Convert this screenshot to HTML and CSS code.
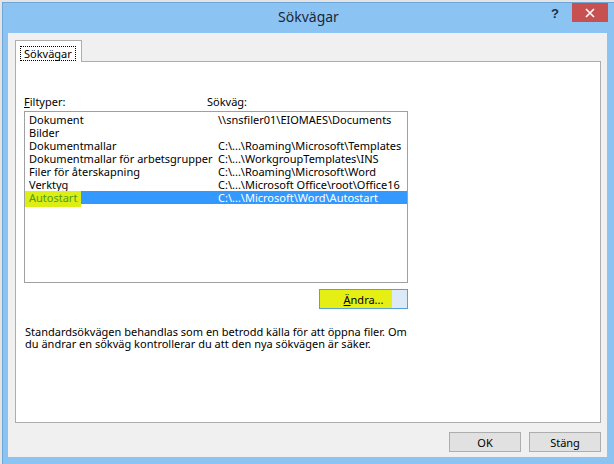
FILE: index.html
```html
<!DOCTYPE html>
<html lang="sv">
<head>
    <meta charset="UTF-8" />
    <title>Sökvägar</title>
    <link rel="stylesheet" href="styles.css">
</head>
<body>
    <div class="window">
        <div class="titlebar">
            <div></div>
            <div class="title">Sökvägar</div>
            <div class="controls">
                <span class="help">?</span>
                <span class="close">
                    <svg width="10" height="10" viewBox="0 0 10 10"><path d="M1 1 L9 9 M9 1 L1 9" stroke="#fff" stroke-width="1.6" /></svg>
                </span>
            </div>
        </div>

        <div class="client">
            <div class="tabs">
                <div class="tab"><span class="focus">Sökvägar</span></div>
            </div>

            <div class="panel">
                <div class="labels">
                    <span><u>F</u>iltyper:</span>
                    <span>Sökväg:</span>
                </div>

                <div class="listbox">
                    <div class="row"><span>Dokument</span><span>\\snsfiler01\EIOMAES\Documents</span></div>
                    <div class="row"><span>Bilder</span><span></span></div>
                    <div class="row"><span>Dokumentmallar</span><span>C:\...\Roaming\Microsoft\Templates</span></div>
                    <div class="row"><span>Dokumentmallar för arbetsgrupper</span><span>C:\...\WorkgroupTemplates\INS</span></div>
                    <div class="row"><span>Filer för återskapning</span><span>C:\...\Roaming\Microsoft\Word</span></div>
                    <div class="row"><span>Verktyg</span><span>C:\...\Microsoft Office\root\Office16</span></div>
                    <!-- marked with a highlighter in the screenshot -->
                    <div class="row selected"><span><span class="marker">Autostart</span></span><span>C:\...\Microsoft\Word\Autostart</span></div>
                </div>

                <div class="change-row">
                    <button class="btn change"><u>Ä</u>ndra...</button>
                </div>

                <p class="note">Standardsökvägen behandlas som en betrodd källa för att öppna filer. Om<br />du ändrar en sökväg kontrollerar du att den nya sökvägen är säker.</p>
            </div>

            <div class="buttons">
                <button class="btn">OK</button>
                <button class="btn">Stäng</button>
            </div>
        </div>
    </div>
</body>
</html>
```

FILE: styles.css
```css
html, body {
    margin: 0;
    padding: 0;
}
body {
    background-color: #e4e4e4;
    font-family: "Noto Sans", "Open Sans", sans-serif;
    font-size: 11px;
    color: #000;
    overflow: hidden;
}
.window {
    box-sizing: border-box;
    margin: 2px 0 0 2px;
    width: 612px;
    height: 462px;
    background-color: #8bc4f3;
    border-left: 1px solid #6ea6da;
    border-top: 1px solid #6ea6da;
    padding: 0 7px 7px 5px;
    display: flex;
    flex-direction: column;
}
.titlebar {
    height: 30px;
    display: grid;
    grid-template-columns: 1fr auto 1fr;
    align-items: start;
}
.title {
    font-size: 14px;
    color: #1c2733;
    line-height: 28px;
    padding-left: 2px;
}
.controls {
    display: flex;
    justify-content: flex-end;
    align-items: center;
    margin-right: -1px;
}
.help {
    font-family: "Liberation Sans", Arial, sans-serif;
    font-weight: bold;
    font-size: 13px;
    color: #1c2e44;
    margin-right: 13px;
    margin-top: 1px;
}
.close {
    width: 36px;
    height: 19px;
    background-color: #c75050;
    display: flex;
    align-items: center;
    justify-content: center;
}
.client {
    flex: 1;
    background-color: #f0f0f0;
    padding: 7px 6px 0 7px;
    display: flex;
    flex-direction: column;
}
.tabs {
    display: flex;
    height: 21px;
}
.tab {
    width: 67px;
    height: 22px;
    box-sizing: border-box;
    background-color: #fff;
    border: 1px solid #adadad;
    border-bottom: none;
    position: relative;
    z-index: 1;
    padding: 5px 0 0 4px;
}
.focus {
    display: inline-block;
    border: 1px dotted #000;
    padding: 0 3px;
    line-height: 13px;
}
.panel {
    background-color: #fff;
    border: 1px solid #adadad;
    height: 362px;
    box-sizing: border-box;
    padding: 33px 0 0 8px;
}
.labels {
    display: grid;
    grid-template-columns: 183px 1fr;
    line-height: 13px;
    height: 13px;
}
.listbox {
    margin-top: 3px;
    width: 384px;
    height: 172px;
    box-sizing: border-box;
    border: 1px solid #a0a0a0;
    padding-top: 1px;
}
.row {
    display: grid;
    grid-template-columns: 189px 1fr;
    height: 13px;
    line-height: 13px;
    padding-left: 4px;
    white-space: nowrap;
}
.row.selected {
    background-color: #3399ff;
    color: #fff;
}
.marker {
    display: inline-block;
    background-color: #dcee14;
    color: #4f9a1c;
    margin-left: -4px;
    padding: 0 4px 2px 4px;
    height: 14px;
    vertical-align: top;
}
.change-row {
    width: 384px;
    display: flex;
    justify-content: flex-end;
    margin-top: 6px;
}
.btn {
    font-family: inherit;
    font-size: 11px;
    width: 72px;
    height: 20px;
    padding: 0;
    border: 1px solid #adadad;
    background-color: #e1e1e1;
    color: #000;
}
.btn.change {
    width: 89px;
    border-color: #5a9fd8;
    background: linear-gradient(to right, #e6ef14 0, #e6ef14 83%, #dce9f6 83%);
}
.note {
    margin: 17px 0 0 1px;
    line-height: 12px;
}
.buttons {
    display: flex;
    justify-content: flex-end;
    gap: 8px;
    margin-top: 9px;
}
```
